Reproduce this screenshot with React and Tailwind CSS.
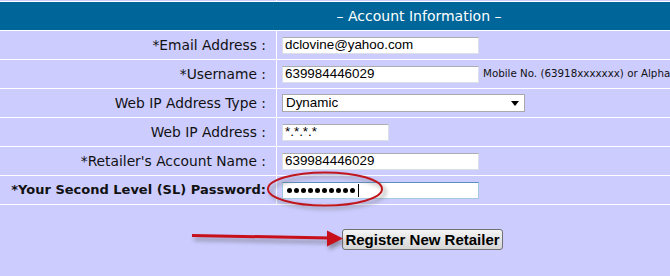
const label = "font-['DejaVu_Sans',Verdana,sans-serif] text-[#111]";
const box =
  "flex h-[17px] items-center border border-[#dbdfe6] border-t-[#abadb3] bg-white px-[2px] font-['Liberation_Sans',Arial,sans-serif] text-[13.4px] text-black";

function Row({ name, bold, children }) {
  return (
    <div className="grid h-[28px] grid-cols-[276px_1fr] gap-px">
      <div
        className={`flex items-center justify-end whitespace-nowrap bg-[#ccccff] pr-[10px] ${label} ${
          bold ? "text-[13px] font-bold" : "text-[13.8px]"
        }`}
      >
        {name}
      </div>
      <div className="flex items-center bg-[#ccccff] pl-[5px]">{children}</div>
    </div>
  );
}

export default function App() {
  return (
    <div className="relative h-[276px] w-[670px] overflow-hidden bg-[#ccccff]">
      <div className="flex w-[838px] flex-col gap-px bg-white pb-px">
        <div className="grid h-px grid-cols-[276px_1fr] gap-px">
          <div className="bg-[#ccccff]" />
          <div className="bg-[#ccccff]" />
        </div>
        <div className="flex h-[28px] items-center justify-center bg-[#006699] font-['DejaVu_Sans',Verdana,sans-serif] text-[14px] text-white">
          – Account Information –
        </div>

        <Row name="*Email Address :">
          <div className={`${box} w-[197px]`}>dclovine@yahoo.com</div>
        </Row>

        <Row name="*Username :">
          <div className={`${box} w-[197px]`}>639984446029</div>
          <span className="ml-[4px] whitespace-nowrap font-['DejaVu_Sans',Verdana,sans-serif] text-[10.3px] text-[#111]">
            Mobile No. (63918xxxxxxx) or AlphaNumeric
          </span>
        </Row>

        <Row name="Web IP Address Type :">
          <div className="flex h-[18px] w-[243px] items-center justify-between border border-[#a9a9a9] bg-white pl-[3px] pr-[5px] font-['Liberation_Sans',Arial,sans-serif] text-[13.4px] text-black">
            <span>Dynamic</span>
            <svg width="8" height="5" viewBox="0 0 8 5">
              <path d="M0 0h8L4 5z" fill="#000" />
            </svg>
          </div>
        </Row>

        <Row name="Web IP Address :">
          <div className={`${box} w-[107px]`}>*.*.*.*</div>
        </Row>

        <Row name="*Retailer's Account Name :">
          <div className={`${box} w-[197px]`}>639984446029</div>
        </Row>

        <Row name="*Your Second Level (SL) Password:" bold>
          <div className="flex h-[17px] w-[197px] items-center gap-[2px] border border-[#a4c9e3] border-t-[#5b8fc0] bg-white pl-[4px]">
            {Array.from({ length: 10 }).map((_, i) => (
              <span key={i} className="h-[5px] w-[5px] rounded-full bg-black" />
            ))}
            <span className="ml-px h-[13px] w-px bg-black" />
          </div>
        </Row>
      </div>

      <div className="flex pl-[342px] pt-[24px]">
        <button className="h-[21px] w-[161px] rounded-[3px] border border-[#707070] bg-gradient-to-b from-[#f4f4f4] to-[#d6d6d6] font-['Liberation_Sans',Arial,sans-serif] text-[15px] leading-none font-bold text-black">
          Register New Retailer
        </button>
      </div>

      <svg className="pointer-events-none absolute left-0 top-0" width="670" height="276">
        <defs>
          <filter id="sh" x="-20%" y="-50%" width="140%" height="200%">
            <feGaussianBlur stdDeviation="2" />
          </filter>
        </defs>
        <ellipse cx="328" cy="192" rx="57" ry="16" fill="none" stroke="#777" strokeWidth="2.5" opacity="0.6" filter="url(#sh)" />
        <ellipse cx="325" cy="189" rx="57" ry="16.5" fill="none" stroke="#c0171f" strokeWidth="2" />
        <g opacity="0.55" filter="url(#sh)">
          <path d="M194 239 L330 242" stroke="#555" strokeWidth="3" />
          <path d="M329 234 L345 242 L329 250z" fill="#555" />
        </g>
        <path d="M192 235.5 L330 238" stroke="#c8101a" strokeWidth="3" />
        <path d="M327 230.5 L343 238.5 L327 246.5z" fill="#c8101a" />
      </svg>
    </div>
  );
}
